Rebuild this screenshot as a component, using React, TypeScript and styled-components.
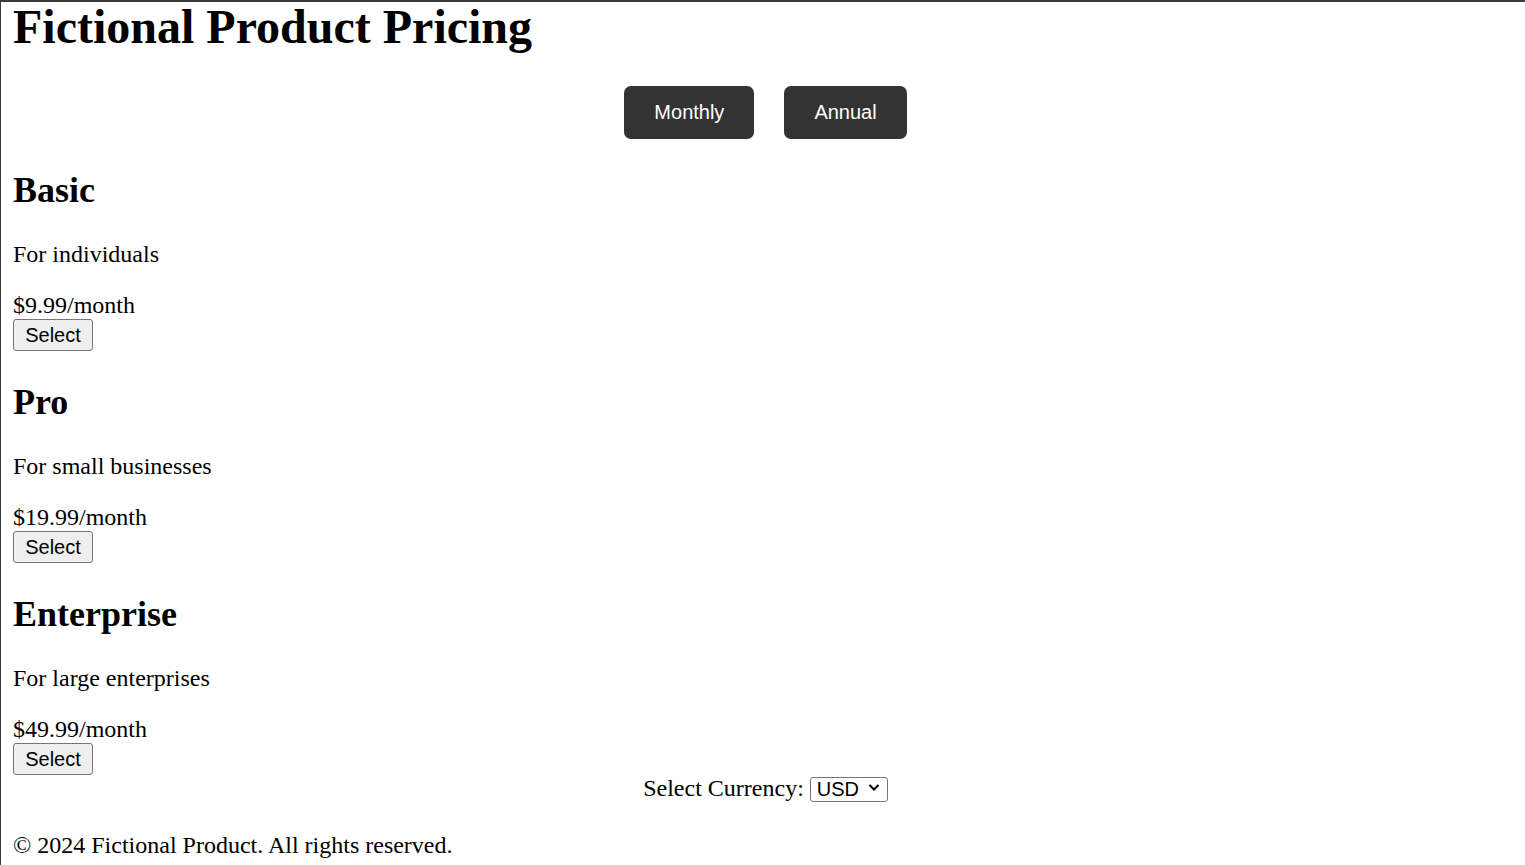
import React, { useState } from "react";
import styled, { createGlobalStyle } from "styled-components";

const GlobalStyle = createGlobalStyle`
  html, body { margin: 0; padding: 0; background: #fff; }
  body {
    font-family: "Liberation Serif", "Times New Roman", serif;
    font-size: 24px;
    color: #000;
    border-top: 2px solid #3a3a3a;
    border-left: 1px solid #3a3a3a;
    padding: 0 7px 0 12px;
    min-height: 100vh;
    box-sizing: border-box;
  }
`;

const Title = styled.h1`
  font-size: 48px;
  font-weight: bold;
  margin: -3px 0 32px 0;
`;

const Toggle = styled.div`
  display: flex;
  justify-content: center;
  gap: 30px;
`;

const ToggleButton = styled.button`
  font-family: "Liberation Sans", Arial, sans-serif;
  font-size: 20px;
  line-height: 23px;
  color: #fff;
  background: #333;
  border: none;
  border-radius: 7px;
  padding: 15px 30px;
  cursor: pointer;
`;

const Plan = styled.div``;

const PlanName = styled.h2`
  font-size: 36px;
  font-weight: bold;
  margin: 30px 0;
`;

const Desc = styled.p`
  margin: 24px 0;
`;

const Price = styled.div``;

const SelectButton = styled.button`
  font-family: "Liberation Sans", Arial, sans-serif;
  font-size: 20px;
  line-height: 23px;
  color: #000;
  background: #efefef;
  border: 1px solid #767676;
  border-radius: 3px;
  padding: 4px 10px 3px;
  width: 80px;
  display: block;
`;

const CurrencyRow = styled.div`
  text-align: center;
`;

const SelectWrap = styled.span`
  position: relative;
  display: inline-block;
  vertical-align: baseline;
`;

const CurrencySelect = styled.select`
  appearance: none;
  -webkit-appearance: none;
  font-family: "Liberation Sans", Arial, sans-serif;
  font-size: 20px;
  line-height: 23px;
  color: #000;
  background: #fff;
  border: 1px solid #767676;
  border-radius: 3px;
  height: 25px;
  width: 78px;
  padding: 0 0 0 6px;
  margin: 0;
  vertical-align: baseline;
`;

const Chevron = styled.svg`
  position: absolute;
  right: 8px;
  top: 8px;
  width: 12px;
  height: 9px;
  pointer-events: none;
`;

const Footer = styled.p`
  margin: 24px 0 0 0;
  padding-top: 6px;
`;

const plans = [
  { name: "Basic", desc: "For individuals", monthly: 9.99 },
  { name: "Pro", desc: "For small businesses", monthly: 19.99 },
  { name: "Enterprise", desc: "For large enterprises", monthly: 49.99 },
];

export default function App() {
  const [period, setPeriod] = useState<"month" | "year">("month");
  const [currency, setCurrency] = useState("USD");
  return (
    <>
      <GlobalStyle />
      <Title>Fictional Product Pricing</Title>
      <Toggle>
        <ToggleButton onClick={() => setPeriod("month")}>Monthly</ToggleButton>
        <ToggleButton onClick={() => setPeriod("year")}>Annual</ToggleButton>
      </Toggle>
      {plans.map((p) => (
        <Plan key={p.name}>
          <PlanName>{p.name}</PlanName>
          <Desc>{p.desc}</Desc>
          <Price>
            {period === "month"
              ? `$${p.monthly}/month`
              : `$${(p.monthly * 10).toFixed(2)}/year`}
          </Price>
          <SelectButton>Select</SelectButton>
        </Plan>
      ))}
      <CurrencyRow>
        Select Currency:{" "}
        <SelectWrap>
          <CurrencySelect value={currency} onChange={(e) => setCurrency(e.target.value)}>
            <option>USD</option>
            <option>EUR</option>
            <option>GBP</option>
          </CurrencySelect>
          <Chevron viewBox="0 0 12 9">
            <path d="M1.5 2 L6 6.5 L10.5 2" fill="none" stroke="#000" strokeWidth="2" />
          </Chevron>
        </SelectWrap>
      </CurrencyRow>
      <Footer>© 2024 Fictional Product. All rights reserved.</Footer>
    </>
  );
}
